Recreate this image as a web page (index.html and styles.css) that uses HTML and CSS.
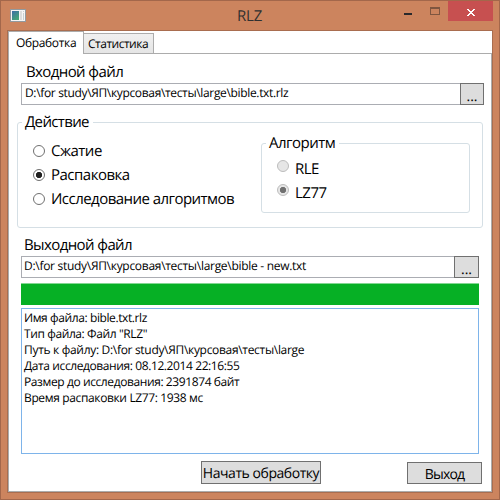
FILE: index.html
```html
<!DOCTYPE html>
<html lang="ru">
<head>
<meta charset="utf-8">
<title>RLZ</title>
<link rel="stylesheet" href="styles.css">
</head>
<body>
<div class="window">
  <header class="titlebar">
    <svg class="app-icon" width="16" height="14" viewBox="0 0 16 14"><defs><linearGradient id="g" x1="0" y1="0" x2="0.6" y2="1"><stop offset="0" stop-color="#3c6fa8"/><stop offset="1" stop-color="#43a678"/></linearGradient></defs><rect x=".5" y=".5" width="15" height="12" fill="#f5f5f5" stroke="#929a9f"/><path d="M2 2h7v9H2z" fill="url(#g)"/><path d="M10 2h2v9h-2z" fill="#dcdcdc"/><path d="M13 2h1v1h-1zM13 4h1v7h-1z" fill="#c9d0cf"/></svg>
    <h1 class="title">RLZ</h1>
    <div class="controls">
      <svg class="min" width="8" height="2" viewBox="0 0 8 2"><path d="M0 0h8v2H0z" fill="#29292c"/></svg>
      <svg class="max" width="10" height="8" viewBox="0 0 10 8"><path fill-rule="evenodd" d="M0 0h10v8H0zM1 2v5h8V2z" fill="#7f5640"/></svg>
      <div class="close"><svg width="8" height="7" viewBox="0 0 8 7" shape-rendering="crispEdges"><path d="M0 0h2v1h1v1h2V1h1V0h2v1H7v1H6v1H5v1h1v1h1v1h1v1H6V6H5V5H3v1H2v1H0V6h1V5h1V4h1V3H2V2H1V1H0z" fill="#fff"/></svg></div>
    </div>
  </header>
  <main class="client">
    <nav class="tabs">
      <div class="tab active"><span class="t-work">Обработка</span></div>
      <div class="tab idle"><span class="t-stat">Статистика</span></div>
    </nav>
    <section class="panel">
      <label class="label in-label">Входной файл</label>
      <div class="file-row file-in"><div class="input path-in">D:\for study\ЯП\курсовая\тесты\large\bible.txt.rlz</div><div class="btn browse">...</div></div>
      <fieldset class="group action">
        <legend class="leg-action">Действие</legend>
        <div class="radios">
          <div class="radio"><i class="dot"></i><span class="r-zip">Сжатие</span></div>
          <div class="radio"><i class="dot on"></i><span class="r-unzip">Распаковка</span></div>
          <div class="radio"><i class="dot"></i><span class="r-study">Исследование алгоритмов</span></div>
        </div>
        <fieldset class="group algo">
          <legend class="leg-algo">Алгоритм</legend>
          <div class="radio off"><i class="dot"></i><span class="r-rle">RLE</span></div>
          <div class="radio off"><i class="dot on"></i><span class="r-lz">LZ77</span></div>
        </fieldset>
      </fieldset>
      <label class="label out-label">Выходной файл</label>
      <div class="file-row file-out"><div class="input path-out">D:\for study\ЯП\курсовая\тесты\large\bible - new.txt</div><div class="btn browse">...</div></div>
      <div class="progress"></div>
      <div class="log">
        <div class="l1">Имя файла: bible.txt.rlz</div>
        <div class="l2">Тип файла: Файл "RLZ"</div>
        <div class="l3">Путь к файлу: D:\for study\ЯП\курсовая\тесты\large</div>
        <div class="l4">Дата исследования: 08.12.2014 22:16:55</div>
        <div class="l5">Размер до исследования: 2391874 байт</div>
        <div class="l6">Время распаковки LZ77: 1938 мс</div>
      </div>
      <footer class="actions"><div class="btn start"><span>Начать обработку</span></div><div class="btn exit"><span>Выход</span></div></footer>
    </section>
  </main>
</div>
</body>
</html>
```
FILE: styles.css
```css
* { box-sizing: border-box; }
body { margin: 0; font: 12px/16px "Open Sans", "Noto Sans", sans-serif; color: #000; white-space: nowrap; overflow: hidden; text-rendering: geometricPrecision; }
.window { width: 500px; height: 500px; background: #cc845e; border: 1px solid #a3674b; display: flex; flex-direction: column; }
.titlebar { height: 29px; display: flex; align-items: flex-start; }
.app-icon { margin: 8px 0 0 9px; }
.title { margin: 4px 0 0 211px; font-size: 15px; line-height: 22px; font-weight: 400; color: #303030; letter-spacing: -.2px; }
.controls { display: flex; margin: 0 6px 0 auto; }
.min { margin: 12px 18px 0 0; }
.max { margin: 6px 8px 0 0; }
.close { width: 45px; height: 20px; background: #c75050; display: flex; align-items: center; justify-content: center; }
.close svg { margin: 2px 0 0 1px; }
.client { margin: 0 6px; width: 486px; height: 463px; border: 1px solid #a96d4f; background: #fff; display: flex; flex-direction: column; }
.tabs { height: 23px; display: flex; align-items: flex-end; border-bottom: 1px solid #acacac; }
.tab { border: 1px solid #acacac; border-bottom: 0; display: flex; }
.active { width: 76px; height: 23px; margin-bottom: -1px; padding: 3px 0 0 7px; background: #fff; }
.idle { width: 70px; height: 20px; border-left: 0; padding: 2px 0 0 4px; background: linear-gradient(#f0f0f0, #e5e5e5); }
.t-work { letter-spacing: -.35px; }
.t-stat { letter-spacing: -.5px; }
.panel { flex: 1; border: 1px solid #acacac; border-top: 0; padding-left: 12px; display: flex; flex-direction: column; align-items: flex-start; }
.label { font-size: 15px; line-height: 20px; letter-spacing: -.6px; }
.in-label { margin: 8px 0 0 5px; }
.file-row { height: 22px; display: flex; }
.file-in { margin-top: 1px; width: 463px; }
.input { flex: 1; border: 1px solid #abadb3; border-right: 0; padding: 1px 0 0 3px; line-height: 16px; }
.path-in { letter-spacing: -.34px; }
.path-out { letter-spacing: -.29px; }
.btn { border: 1px solid #707070; background: #ddd; font-size: 14px; display: flex; justify-content: center; align-items: center; }
.browse { width: 24px; line-height: 20px; padding-top: 5px; }
.group { border: 1px solid #d5dfe5; border-radius: 3px; margin: 0; padding: 0; font-size: 15px; min-width: 0; letter-spacing: -.5px; }
.group legend { height: 20px; line-height: 20px; padding: 0 4px 0 3px; margin-left: 4px; }
.action { width: 466px; height: 116px; margin: 7px 0 0 -4px; }
.leg-action { letter-spacing: -.65px; }
.radios { padding: 7px 0 0 15px; float: left; width: 243px; }
.radio { height: 24px; line-height: 22px; display: flex; align-items: center; }
.dot { width: 12px; height: 12px; border: 1px solid #707070; border-radius: 50%; margin-right: 6px; background: #fff; flex: none; }
.dot.on { background: radial-gradient(circle, #212121 0 2.8px, #fff 3.5px); }
.radios span { margin-top: 0; }
.r-study { letter-spacing: -.54px; }
.algo { width: 209px; height: 80px; float: left; margin-top: 1px; }
.algo .radio { padding-left: 15px; }
.algo .radio:nth-of-type(1) { margin-top: 2px; }
.algo .radio span { margin-top: 3px; }
.off .dot { border-color: #bcbcbc; background: #e6e6e6; margin-top: -3px; }
.off .dot.on { background: radial-gradient(circle, #707070 0 2.8px, #e6e6e6 3.5px); }
.out-label { margin: 7px 0 0 3px; }
.file-out { margin-top: 1px; width: 458px; }
.file-out .input { padding-left: 2px; }
.file-out .browse { width: 25px; }
.progress { width: 458px; height: 22px; margin-top: 5px; background: #06b025; border-top: 1px solid #83d792; }
.log { width: 458px; height: 146px; margin-top: 3px; border: 1px solid #7eb4ea; padding: 1px 0 0 2px; letter-spacing: -.4px; }
.l3 { letter-spacing: -.31px; }
.l6 { letter-spacing: -.36px; }
.actions { display: flex; align-items: flex-end; height: 23px; margin: 7px 0 0 180px; }
.start { width: 120px; height: 23px; padding-top: 3px; letter-spacing: -.45px; }
.exit { width: 75px; height: 22px; margin-left: 86px; padding-top: 3px; letter-spacing: -.8px; }
```
